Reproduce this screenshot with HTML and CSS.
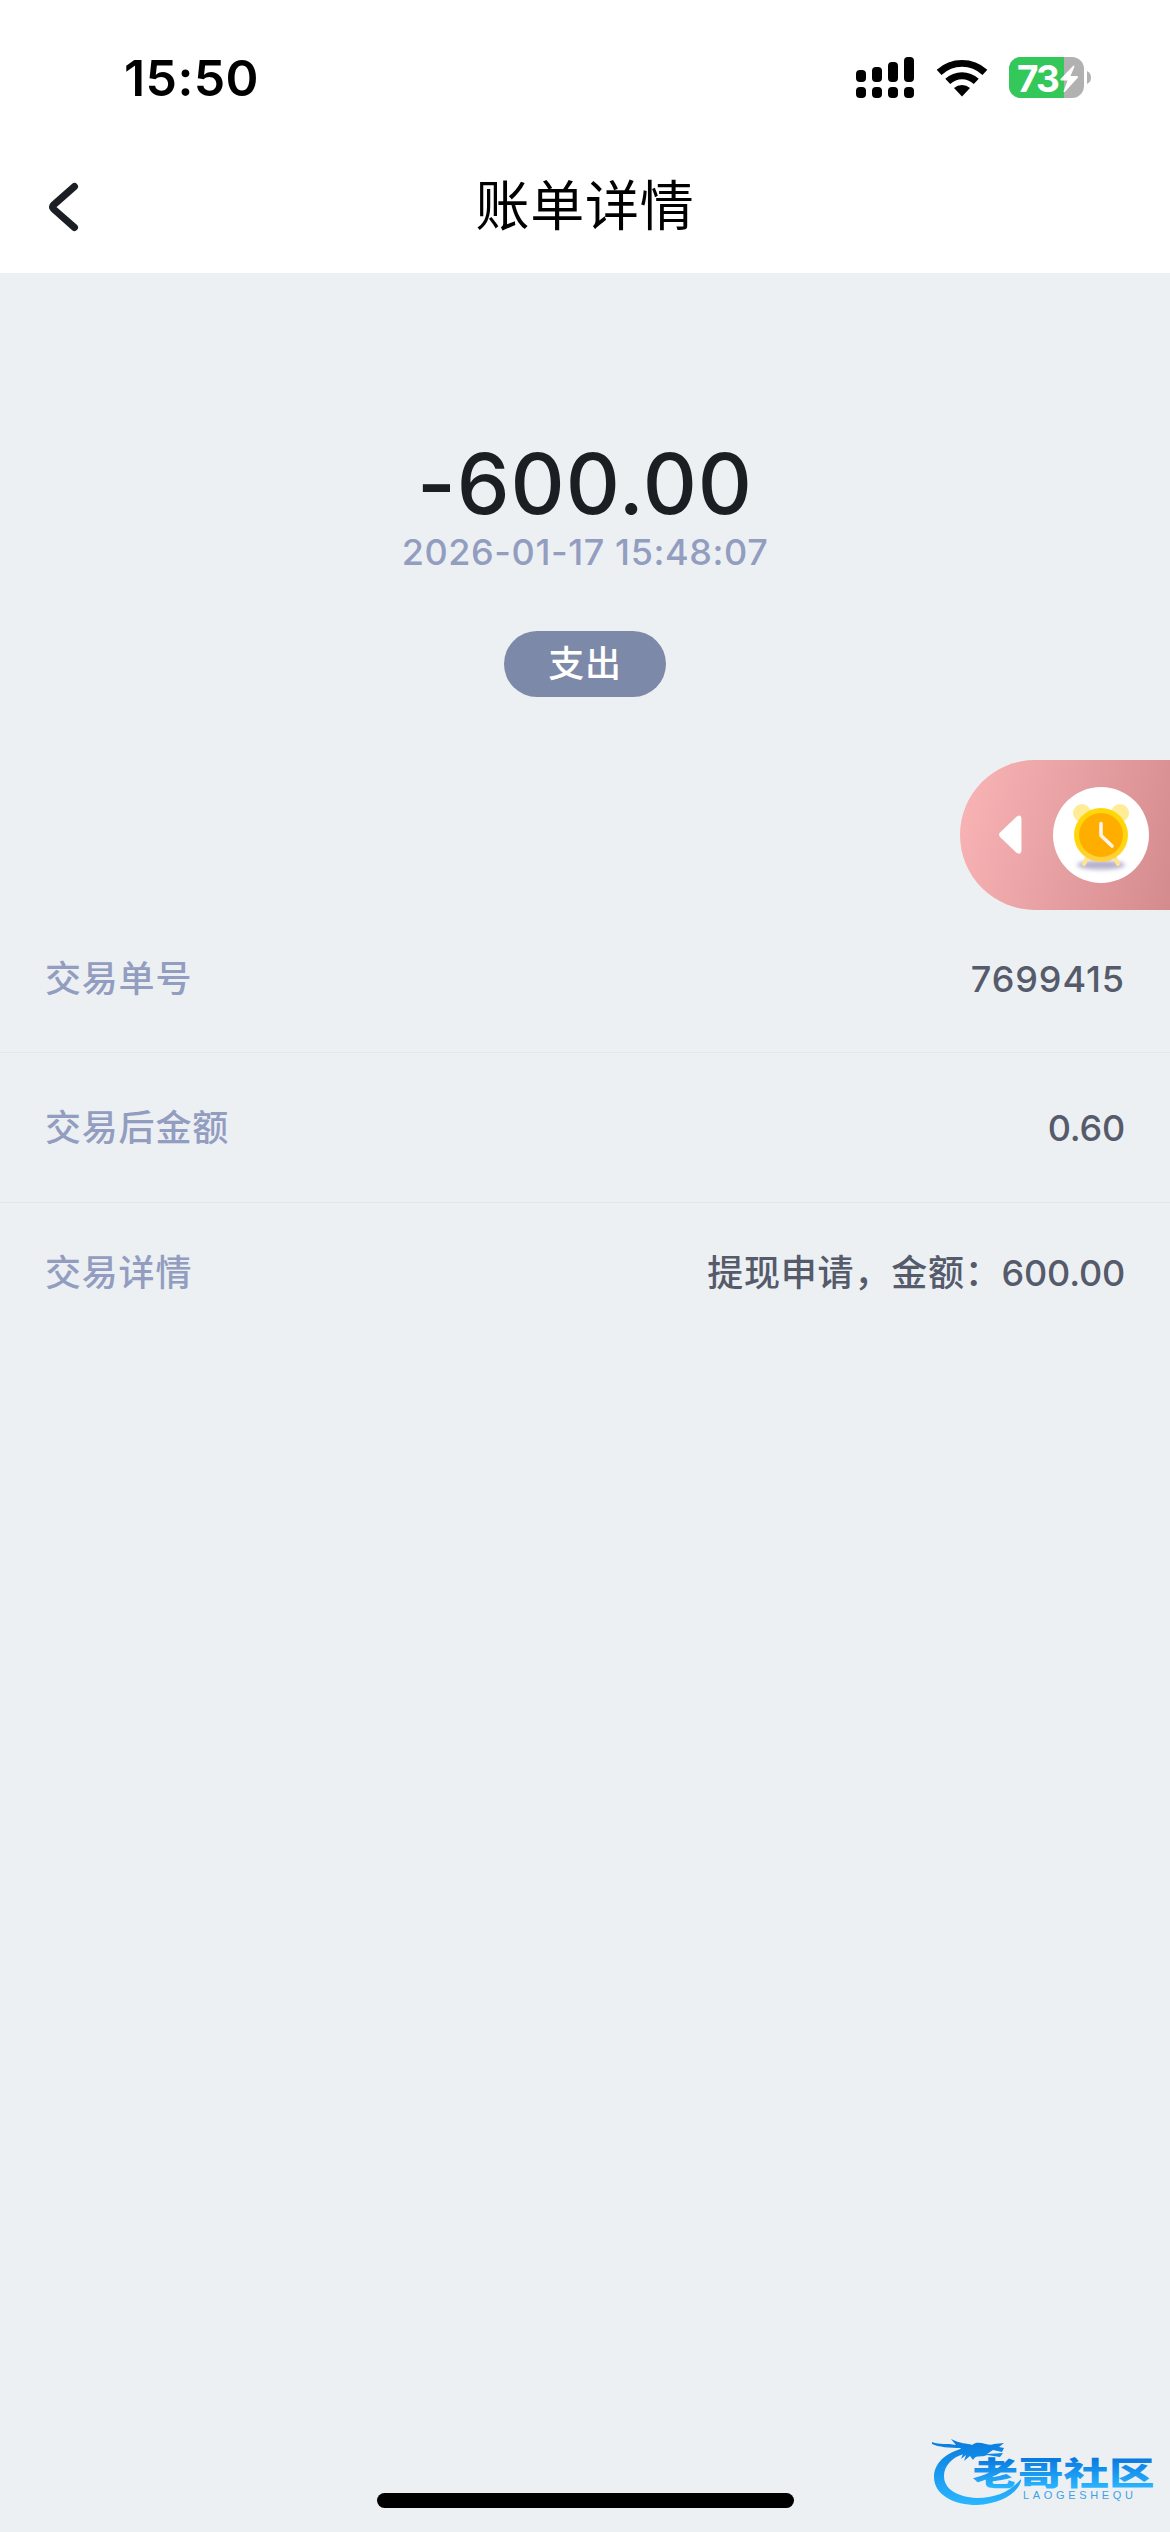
FILE: index.html
```html
<!DOCTYPE html>
<html lang="zh-CN">
<head>
<meta charset="utf-8">
<title>账单详情</title>
<link rel="stylesheet" href="styles.css">
</head>
<body>
<div class="screen">
  <header class="top">
    <div class="status">
      <span class="time">15:50</span>
      <div class="indicators">
        <svg class="signal" width="58" height="41" viewBox="0 0 58 41">
          <rect x="0" y="13" width="10" height="12" rx="4"/><rect x="16" y="10" width="10" height="15" rx="4"/><rect x="32" y="5" width="10" height="20" rx="4"/><rect x="48" y="0" width="10" height="25" rx="4"/>
          <rect x="0" y="30" width="10" height="11" rx="4"/><rect x="16" y="30" width="10" height="11" rx="4"/><rect x="32" y="30" width="10" height="11" rx="4"/><rect x="48" y="30" width="10" height="11" rx="4"/>
        </svg>
        <svg class="wifi" width="52" height="38" viewBox="0 0 52 38">
          <path d="M.7 10.7Q11.5 1 26 1T51.300 10.700L46.500 16Q37.500 7.800 26 7.800T5.500 16Z"/>
          <path d="M9.300 19.800Q16.500 13.200 26 13.200T42.700 19.800L37.800 25Q32.500 20.200 26 20.200T14.200 25Z"/>
          <path d="M18 29Q21.500 26 26 26T34 29L26 37.500Z"/>
        </svg>
        <div class="battery">
          <svg width="84" height="41" viewBox="0 0 84 41">
            <defs><clipPath id="body"><rect width="75" height="41" rx="12"/></clipPath></defs>
            <g clip-path="url(#body)"><rect width="75" height="41" fill="#b1b1b1"/><rect width="55" height="41" fill="#34c759"/></g>
            <path d="M78 14Q82 16 82 20.500T78 27Z" fill="#b1b1b1"/>
            <path d="M64.500 8.500L51.500 22Q51 23.500 52.500 23.500H58.500L54.500 34.500Q55 35.500 56 34.800L69 20.500Q69.500 19 68 19H61.500L65.500 9.500Q65.500 8.500 64.500 8.500Z" fill="#fff"/>
          </svg>
          <span class="charge">73</span>
        </div>
      </div>
    </div>
    <nav class="nav">
      <svg class="back" width="34" height="52" viewBox="0 0 34 52"><path d="M28.500 5.500L7.500 24Q5.300 26 7.500 28L28.500 46.500"/></svg>
      <h1 class="title">账单详情</h1>
    </nav>
  </header>

  <main>
    <section class="summary">
      <div class="amount">-600.00</div>
      <div class="date">2026-01-17 15:48:07</div>
      <span class="tag">支出</span>
    </section>
    <dl class="details">
      <div class="row"><dt>交易单号</dt><dd class="serial">7699415</dd></div>
      <div class="row"><dt>交易后金额</dt><dd><span class="money">0.60</span></dd></div>
      <div class="row last"><dt>交易详情</dt><dd>提现申请，金额：<span class="money">600.00</span></dd></div>
    </dl>
  </main>

  <aside class="floating">
    <svg class="arrow" width="23" height="40" viewBox="0 0 24 42"><path d="M1 18.500L18 2Q23-2 23.500 4V37Q23 42.500 18 39.500L1 23Q-1 20.800 1 18.500Z" fill="#fff"/></svg>
    <div class="disc">
      <svg width="96" height="96" viewBox="0 0 96 96">
        <defs><filter id="soft" x="-20%" y="-80%" width="140%" height="260%"><feGaussianBlur stdDeviation="2"/></filter>
        <linearGradient id="rim" x1="0" y1="0" x2="0" y2="1"><stop offset="0" stop-color="#ffd60a"/><stop offset=".65" stop-color="#ffd60a"/><stop offset="1" stop-color="#ffd04a"/></linearGradient></defs>
        <ellipse cx="48" cy="78" rx="24" ry="4.500" fill="#b4b0cc" filter="url(#soft)"/>
        <circle cx="29" cy="26" r="9" fill="#ffec96"/><circle cx="67" cy="26" r="9" fill="#ffec96"/>
        <path d="M34 71L31 77M62 71L65 77" stroke="#ffe68c" stroke-width="4" stroke-linecap="round"/>
        <circle cx="48" cy="48" r="27" fill="url(#rim)"/><circle cx="48" cy="48" r="22" fill="#ffae00"/>
        <path d="M48 36.500V48.500L59 59" fill="none" stroke="#fff4ed" stroke-width="3.600" stroke-linecap="round" stroke-linejoin="round"/>
      </svg>
    </div>
  </aside>

  <svg class="brand" width="230" height="84" viewBox="0 0 230 84">
    <defs>
      <linearGradient id="ring" gradientUnits="userSpaceOnUse" x1="0" y1="8" x2="0" y2="76"><stop offset="0" stop-color="#0879dd"/><stop offset="1" stop-color="#2bb7ff"/></linearGradient>
      <linearGradient id="word" gradientUnits="userSpaceOnUse" x1="0" y1="-38" x2="0" y2="4"><stop offset="0" stop-color="#0878df"/><stop offset="1" stop-color="#2ab5ff"/></linearGradient>
    </defs>
    <g fill="url(#ring)">
      <path d="M35 18C16 22 4 33 4 47C4 65 24 75 47 75C68 74 87 65 91 51V49C80 62 65 68 47 68C27 67 14 59 14 46C14 36 22 27 34 24Z"/>
      <path d="M2 12C10 15 17 13 26 15L21 9C30 14 37 13 42 15C49 9 58 17 64 14L74 13L69 17L74 18L72 22L63 20L57 24L73 23L70 27L57 25C52 28 46 24 43 30L40 26L34 31L36 25L31 29L34 21L26 24L31 18C20 18 8 17 2 14Z"/>
    </g>
    <g transform="translate(42.500 55) scale(1 .72)"><text class="brand-name" x="0" y="0" textLength="182" lengthAdjust="spacingAndGlyphs" fill="url(#word)">老哥社区</text></g>
    <text class="brand-latin" x="93" y="69" textLength="110">LAOGESHEQU</text>
  </svg>
  <div class="home"></div>
</div>
</body>
</html>
```

FILE: styles.css
```css
* { box-sizing: border-box; }
body { margin: 0; font-family: Inter, "Noto Sans CJK SC", sans-serif; }
.screen { position: relative; width: 1170px; height: 2532px; background: #ecf0f3; overflow: hidden; }
.top { height: 273px; background: #fff; }
.status { height: 141px; padding: 8px 77px 0 124px; display: flex; justify-content: space-between; align-items: center; }
.time { font-size: 50px; font-weight: 600; line-height: 60px; padding-top: 6px; letter-spacing: .4px; }
.indicators { display: flex; align-items: center; padding-top: 6px; }
.wifi { margin-left: 22px; }
.battery { position: relative; margin-left: 21px; width: 84px; height: 41px; }
.battery svg { display: block; }
.charge { position: absolute; left: 8px; top: -1px; color: #fff; font-size: 37px; font-weight: 700; line-height: 45px; letter-spacing: -2px; }
.nav { height: 132px; display: grid; grid-template-columns: 100px 1fr 100px; align-items: center; }
.back { margin-left: 46px; }
.back path { fill: none; stroke: #1b1f24; stroke-width: 7; stroke-linecap: round; }
.title { margin: 0; text-align: center; font-size: 54px; font-weight: 400; line-height: 80px; letter-spacing: .7px; }
.summary { height: 633px; padding-top: 160px; display: flex; flex-direction: column; align-items: center; }
.amount { font-size: 84px; font-weight: 500; line-height: 97px; padding-top: 2px; color: #1b1f24; letter-spacing: .9px; }
.date { font-size: 36px; line-height: 44px; margin-top: -2px; color: #929dc0; font-weight: 450; letter-spacing: .6px; }
.tag { width: 162px; height: 66px; margin-top: 57px; border-radius: 33px; background: #7c89a8; color: #fff; text-align: center; font-size: 36px; font-weight: 500; line-height: 67px; letter-spacing: .7px; }
.details { margin: 0; }
.row { height: 150px; padding: 1px 45px 0; display: flex; justify-content: space-between; align-items: center; font-size: 36px; line-height: 54px; letter-spacing: .8px; border-bottom: 1px solid #e6e6e8; }
.row:first-child { height: 147px; padding-top: 0; }
.row.last { height: 138px; border: 0; }
dt { color: #929dc0; font-weight: 500; }
dd { margin: 0; color: #555b6b; font-weight: 500; }
.serial { letter-spacing: .9px; }
.money { letter-spacing: -.2px; }
.floating { position: absolute; right: 0; top: 760px; width: 210px; height: 150px; border-radius: 75px 0 0 75px; padding: 0 21px 0 39px; display: flex; align-items: center; justify-content: space-between; background: linear-gradient(105deg, #fab5b7, #d48b8e); }
.disc { width: 96px; height: 96px; border-radius: 50%; background: #fff; }
.disc svg { display: block; }
.brand { position: absolute; left: 930px; top: 2430px; overflow: visible; }
.brand-name { font: 900 45px "Noto Sans CJK SC", sans-serif; }
.brand-latin { font: 400 11px "Liberation Sans", sans-serif; fill: #3f9fe6; }
.home { position: absolute; left: 377px; top: 2493px; width: 417px; height: 15px; border-radius: 8px; background: #000; }
```
